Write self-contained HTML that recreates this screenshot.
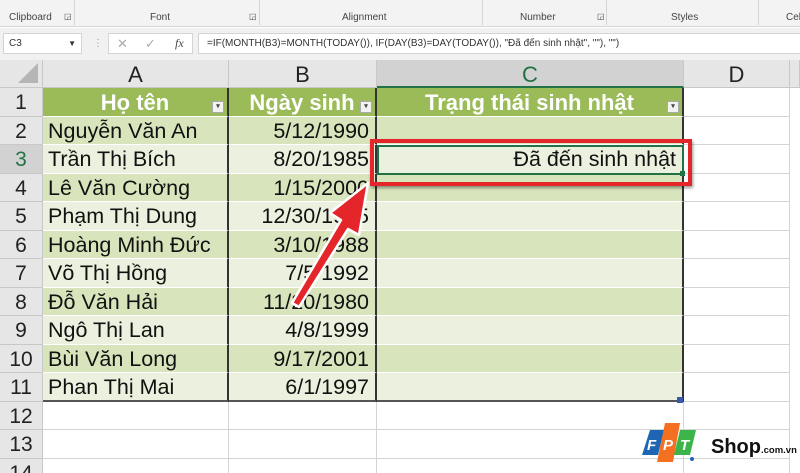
<!DOCTYPE html>
<html><head><meta charset="utf-8"><style>
*{margin:0;padding:0;box-sizing:border-box}
html,body{width:800px;height:473px;overflow:hidden}
body{background:#fff;font-family:"Liberation Sans",Arial,sans-serif;position:relative}
.abs{position:absolute}
.rib{left:0;top:0;width:800px;height:27px;background:#f3f3f3;border-bottom:1px solid #d6d6d6}
.rl{position:absolute;top:12px;font-size:10px;color:#444}
.vs{position:absolute;top:0;width:1px;height:25px;background:#d4d4d4}
.fb{left:0;top:28px;width:800px;height:32px;background:#f1f1f1}
.box{position:absolute;background:#fff;border:1px solid #d4d4d4;height:21px;top:33px;font-size:10px;color:#333;line-height:19px}
.ch{position:absolute;top:60px;height:28px;background:#e6e6e6;border-right:1px solid #c8c8c8;border-bottom:1px solid #c8c8c8;text-align:center;font-size:22px;line-height:30px;color:#222}
.rh{position:absolute;left:0;width:43px;height:28.5px;background:#e6e6e6;border-bottom:1px solid #c8c8c8;border-right:1px solid #c8c8c8;text-align:center;font-size:21px;line-height:30px;color:#222}
.c{position:absolute;height:28.5px;border-bottom:1px solid #fff;font-size:21.5px;line-height:29px;color:#111;white-space:nowrap;overflow:hidden}
.g{border-right:1px solid #d4d4d4;border-bottom:1px solid #d4d4d4}
.h{background:#9bbb59;color:#fff;font-weight:bold;text-align:center;font-size:22px}
.dd{position:absolute;right:3px;bottom:3px;width:12px;height:12px;background:#f2f2f2;border:1px solid #aaa;font-size:7px;line-height:10px;color:#444;text-align:center}
</style></head><body>
<div class="abs rib">
<div class="rl" style="left:9px">Clipboard</div><div class="rl" style="left:64px;font-size:8px">◲</div><div class="vs" style="left:74px"></div>
<div class="rl" style="left:150px">Font</div><div class="rl" style="left:249px;font-size:8px">◲</div><div class="vs" style="left:259px"></div>
<div class="rl" style="left:342px">Alignment</div><div class="vs" style="left:482px"></div>
<div class="rl" style="left:520px">Number</div><div class="rl" style="left:597px;font-size:8px">◲</div><div class="vs" style="left:606px"></div>
<div class="rl" style="left:671px">Styles</div><div class="vs" style="left:758px"></div><div class="rl" style="left:786px">Cel</div>
</div>
<div class="abs fb"></div>
<div class="box" style="left:3px;width:79px;padding-left:5px">C3<span style="position:absolute;right:5px;font-size:8px">▼</span></div>
<div class="abs" style="left:93px;top:38px;font-size:10px;color:#999">⋮</div>
<div class="box" style="left:108px;width:85px;color:#aaa;font-size:13px"><span style="position:absolute;left:8px">✕</span><span style="position:absolute;left:36px">✓</span><span style="position:absolute;left:66px;color:#444;font-style:italic;font-family:'Liberation Serif',serif;font-size:12px">fx</span></div>
<div class="box" style="left:198px;width:602px;padding-left:8px;border-right:none">=IF(MONTH(B3)=MONTH(TODAY()), IF(DAY(B3)=DAY(TODAY()), "Đã đến sinh nhật", ""), "")</div>
<div class="abs" style="left:0;top:60px;width:43px;height:28px;background:#e6e6e6;border-right:1px solid #c8c8c8;border-bottom:1px solid #c8c8c8"><div style="position:absolute;right:4px;bottom:4px;width:0;height:0;border-left:20px solid transparent;border-bottom:20px solid #b5b5b5"></div></div>
<div class="ch" style="left:43px;width:186px">A</div>
<div class="ch" style="left:229px;width:148px">B</div>
<div class="ch" style="left:377px;width:307px;background:#d2d2d2;color:#217346;border-bottom:2px solid #217346">C</div>
<div class="ch" style="left:684px;width:106px">D</div>
<div class="ch" style="left:790px;width:10px"></div>
<div id="grid"></div>
<script>
var names=["Nguyễn Văn An","Trần Thị Bích","Lê Văn Cường","Phạm Thị Dung","Hoàng Minh Đức","Võ Thị Hồng","Đỗ Văn Hải","Ngô Thị Lan","Bùi Văn Long","Phan Thị Mai"];
var dates=["5/12/1990","8/20/1985","1/15/2000","12/30/1995","3/10/1988","7/5/1992","11/20/1980","4/8/1999","9/17/2001","6/1/1997"];
var h="";
for(var r=1;r<=14;r++){var y=88+(r-1)*28.5;
h+='<div class="rh" style="top:'+y+'px;'+(r==3?'background:#d2d2d2;color:#217346':'')+'">'+r+'</div>';
if(r==1){
h+='<div class="c h" style="top:'+y+'px;left:43px;width:186px;border-right:2px solid #333">Họ tên<div class="dd">▾</div></div>';
h+='<div class="c h" style="top:'+y+'px;left:229px;width:148px;border-right:2px solid #333">Ngày sinh<div class="dd">▾</div></div>';
h+='<div class="c h" style="top:'+y+'px;left:377px;width:307px;border-right:2px solid #333">Trạng thái sinh nhật<div class="dd">▾</div></div>';
h+='<div class="c g" style="top:'+y+'px;left:684px;width:106px"></div>';
}else if(r<=11){var bg=(r%2==0)?'#d8e4bc':'#ebf1de';var bb=r==11?'2px solid #555':'1px solid #fff';
h+='<div class="c" style="top:'+y+'px;left:43px;width:186px;background:'+bg+';padding-left:5px;border-right:2px solid #333;border-bottom:'+bb+'">'+names[r-2]+'</div>';
h+='<div class="c" style="top:'+y+'px;left:229px;width:148px;background:'+bg+';text-align:right;padding-right:6px;border-right:2px solid #333;border-bottom:'+bb+'">'+dates[r-2]+'</div>';
h+='<div class="c" style="top:'+y+'px;left:377px;width:307px;background:'+bg+';text-align:right;padding-right:6px;border-right:2px solid #333;border-bottom:'+bb+'">'+(r==3?'Đã đến sinh nhật':'')+'</div>';
h+='<div class="c g" style="top:'+y+'px;left:684px;width:106px"></div>';
}else{
h+='<div class="c g" style="top:'+y+'px;left:43px;width:186px"></div><div class="c g" style="top:'+y+'px;left:229px;width:148px"></div><div class="c g" style="top:'+y+'px;left:377px;width:307px"></div><div class="c g" style="top:'+y+'px;left:684px;width:106px"></div>';}
}
document.getElementById('grid').innerHTML=h;
</script>
<div class="abs" style="left:377px;top:145px;width:307px;height:30px;border:2px solid #217346"></div>
<div class="abs" style="left:680px;top:171px;width:5px;height:5px;background:#217346"></div>
<div class="abs" style="left:677px;top:397px;width:6px;height:6px;background:#3a58a8"></div>
<div class="abs" style="left:370px;top:139px;width:322px;height:47px;border:4px solid #e4262b;box-shadow:1px 2px 3px rgba(0,0,0,.4)"></div>
<svg class="abs" style="left:280px;top:175px" width="100" height="135" viewBox="0 0 100 135">
<polygon points="12,128 19,132 68,54 79,60 88,8 50,38 61,45" fill="#e4262b" stroke="#fff" stroke-width="2.5" stroke-linejoin="round"/>
</svg>
<svg class="abs" style="left:640px;top:422px" width="160" height="46">
<polygon points="10,8 24,8 18,33 2,33" fill="#1e66b4"/>
<polygon points="25,1 40,1 33,40 17,40" fill="#f37021"/>
<polygon points="40,8 56,8 50,33 34,33" fill="#3bb54a"/>
<text x="7" y="28" fill="#fff" font-size="15" font-weight="bold" font-style="italic" font-family="Liberation Sans">F</text>
<text x="23" y="28" fill="#fff" font-size="15" font-weight="bold" font-style="italic" font-family="Liberation Sans">P</text>
<text x="40" y="28" fill="#fff" font-size="15" font-weight="bold" font-style="italic" font-family="Liberation Sans">T</text>
<circle cx="52" cy="37" r="2" fill="#1e66b4"/>
<text x="71" y="31" fill="#111" font-size="20" font-weight="bold" font-family="Liberation Sans">Shop</text>
<text x="121" y="31" fill="#111" font-size="9.5" font-weight="bold" font-family="Liberation Sans">.com.vn</text>
</svg>
</body></html>
